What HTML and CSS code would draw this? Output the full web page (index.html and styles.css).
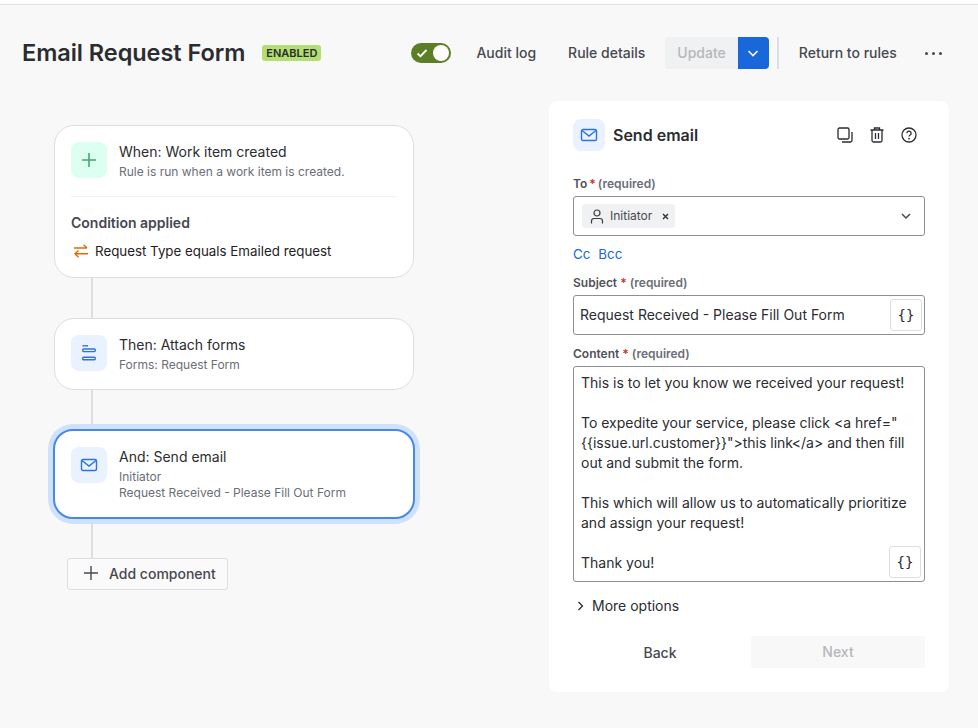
FILE: index.html
```html
<!DOCTYPE html>
<html>
  <head>
    <meta charset="utf-8" />
    <title>Email Request Form</title>
    <link rel="stylesheet" href="styles.css">
  </head>
  <body>
    <div class="top-line"></div>
    <header class="header">
      <h1 class="title">Email Request Form</h1>
      <span class="lozenge">ENABLED</span>
      <div class="toggle">
        <svg class="toggle-check" width="12" height="12" viewBox="0 0 12 12"><path d="M1.500 6.500 4.500 9.200 10.500 3" fill="none" stroke="#fff" stroke-width="1.8"/></svg>
        <span class="toggle-knob"></span>
      </div>
      <a class="head-link audit">Audit log</a>
      <a class="head-link details">Rule details</a>
      <div class="split">
        <span class="split-main">Update</span>
        <span class="split-arrow">
          <svg width="12" height="12" viewBox="0 0 12 12"><path d="M1.500 4 6 8.500 10.500 4" fill="none" stroke="#fff" stroke-width="1.6"/></svg>
        </span>
      </div>
      <span class="head-divider"></span>
      <a class="head-link return">Return to rules</a>
      <span class="dots"><i></i><i></i><i></i></span>
    </header>

    <main class="main">
      <section class="flow">
        <div class="card">
          <div class="card-row">
            <span class="tile tile-green">
              <svg width="18" height="18" viewBox="0 0 18 18"><path d="M9 2v14M2 9h14" stroke="#3fa878" stroke-width="1.6" fill="none"/></svg>
            </span>
            <div class="card-text">
              <div class="card-title">When: Work item created</div>
              <div class="card-sub">Rule is run when a work item is created.</div>
            </div>
          </div>
          <div class="card-rule"></div>
          <div class="cond-title">Condition applied</div>
          <div class="cond-row">
            <svg width="14" height="14" viewBox="0 0 14 14"><path d="M0 4H13M9.500 .8 13 4M14 9.800H1M4.500 6.500 1 9.800 4.500 13.200" fill="none" stroke="#e06c00" stroke-width="1.4"/></svg>
            <span>Request Type equals Emailed request</span>
          </div>
        </div>
        <div class="line"></div>
        <div class="card">
          <div class="card-row">
            <span class="tile tile-blue">
              <svg width="14" height="16" viewBox="0 0 14 16"><g fill="none" stroke="#2d72e0" stroke-width="1.400"><path d="M.5 .8H6"/><rect x=".7" y="4" width="12.600" height="2.600" rx="1"/><rect x=".7" y="12.200" width="12.600" height="2.600" rx="1"/></g></svg>
            </span>
            <div class="card-text">
              <div class="card-title">Then: Attach forms</div>
              <div class="card-sub">Forms: Request Form</div>
            </div>
          </div>
        </div>
        <div class="line"></div>
        <div class="card card-active">
          <div class="card-row">
            <span class="tile tile-blue">
              <svg width="18" height="14" viewBox="0 0 18 14"><g fill="none" stroke="#2d72e0" stroke-width="1.4"><rect x="1.500" y="1.500" width="15" height="11" rx="1.500"/><path d="M2 2.500 9 8l7-5.500"/></g></svg>
            </span>
            <div class="card-text">
              <div class="card-title">And: Send email</div>
              <div class="card-sub">Initiator</div>
              <div class="card-sub">Request Received - Please Fill Out Form</div>
            </div>
          </div>
        </div>
        <div class="line"></div>
        <div class="add-btn">
          <svg width="16" height="16" viewBox="0 0 16 16"><path d="M8 1v14M1 8h14" stroke="#46484f" stroke-width="1.4" fill="none"/></svg>
          <span>Add component</span>
        </div>
      </section>

      <section class="panel">
        <div class="panel-head">
          <span class="tile tile-small">
            <svg width="18" height="14" viewBox="0 0 18 14"><g fill="none" stroke="#2d72e0" stroke-width="1.4"><rect x="1.500" y="1.500" width="15" height="11" rx="1.500"/><path d="M2 2.500 9 8l7-5.500"/></g></svg>
          </span>
          <h2 class="panel-title">Send email</h2>
          <div class="panel-tools">
            <svg width="16" height="16" viewBox="0 0 16 16"><g fill="none" stroke="#2b2c30" stroke-width="1.3"><rect x="1" y="1" width="11" height="11" rx="1.500"/><path d="M15 5v8.500a1.500 1.500 0 0 1-1.500 1.500H5"/></g></svg>
            <svg width="14" height="16" viewBox="0 0 14 16"><g fill="none" stroke="#2b2c30" stroke-width="1.3"><path d="M.5 3h13M4.500 3V1h5v2M2 3v10.500A1.500 1.500 0 0 0 3.500 15h7a1.500 1.500 0 0 0 1.500-1.500V3M5.500 6v6M8.500 6v6"/></g></svg>
            <svg width="16" height="16" viewBox="0 0 16 16"><g fill="none" stroke="#2b2c30" stroke-width="1.3"><circle cx="8" cy="8" r="7"/><path d="M5.900 6.200a2.100 2.100 0 1 1 3.200 1.800c-.7.400-1.100.8-1.100 1.600"/></g><circle cx="8" cy="11.600" r=".9" fill="#2b2c30"/></svg>
          </div>
        </div>

        <label class="field-label label-to">To <b>*</b> <em>(required)</em></label>
        <div class="select">
          <span class="chip">
            <svg width="14" height="15" viewBox="0 0 14 15"><g fill="none" stroke="#3a3b40" stroke-width="1.2"><circle cx="7" cy="4" r="3"/><path d="M1.500 14.500V12a2.500 2.500 0 0 1 2.500-2.500h6a2.500 2.500 0 0 1 2.500 2.500v2.500"/></g></svg>
            <span class="chip-text">Initiator</span>
            <svg class="chip-x" width="7" height="7" viewBox="0 0 7 7"><path d="M1 1l5 5M6 1 1 6" stroke="#2b2c30" stroke-width="1.300" fill="none"/></svg>
          </span>
          <svg class="select-arrow" width="10" height="10" viewBox="0 0 10 10"><path d="M1 3 5 7l4-4" fill="none" stroke="#46484f" stroke-width="1.500"/></svg>
        </div>
        <div class="cc-row"><a>Cc</a><a>Bcc</a></div>

        <label class="field-label label-subject">Subject <b>*</b> <em>(required)</em></label>
        <div class="input">
          <span class="input-text">Request Received - Please Fill Out Form</span>
          <span class="var-btn">{}</span>
        </div>

        <label class="field-label label-content">Content <b>*</b> <em>(required)</em></label>
        <div class="textarea">
          <p>This is to let you know we received your request!</p>
          <p>&nbsp;</p>
          <p>To expedite your service, please click &lt;a href="</p>
          <p>{{issue.url.customer}}"&gt;this link&lt;/a&gt; and then fill</p>
          <p>out and submit the form.</p>
          <p>&nbsp;</p>
          <p>This which will allow us to automatically prioritize</p>
          <p>and assign your request!</p>
          <p>&nbsp;</p>
          <p>Thank you!</p>
          <span class="var-btn var-float">{}</span>
        </div>

        <div class="more">
          <svg width="8" height="10" viewBox="0 0 8 10"><path d="M1.500 1 5.500 5l-4 4" fill="none" stroke="#2b2c30" stroke-width="1.300"/></svg>
          <span>More options</span>
        </div>

        <div class="panel-foot">
          <span class="back">Back</span>
          <span class="next">Next</span>
        </div>
      </section>
    </main>
  </body>
</html>
```

FILE: styles.css
```css
html,
body {
  margin: 0;
  padding: 0;
  height: 100%;
}

body {
  background-color: #f8f8f8;
  font-family: Inter, "Liberation Sans", sans-serif;
  color: #2b2c30;
  overflow: hidden;
}

h1, h2, p {
  margin: 0;
}

.top-line {
  height: 4px;
  background-color: #fff;
  border-bottom: 1px solid #e2e2e4;
}

.header {
  display: flex;
  align-items: center;
  height: 96px;
  padding-left: 22px;
}

.title {
  padding-bottom: 2px;
  font-size: 23.5px;
  font-weight: 600;
  letter-spacing: -0.05px;
  color: #2b2c30;
  white-space: nowrap;
}

.lozenge {
  margin-left: 17px;
  padding: 0 4px;
  height: 16px;
  line-height: 16px;
  font-size: 11px;
  font-weight: 600;
  background-color: #b3df72;
  border-radius: 3px;
}

.toggle {
  display: flex;
  align-items: center;
  justify-content: space-between;
  box-sizing: border-box;
  width: 40px;
  height: 20px;
  margin-left: 90px;
  padding: 0 2px 0 5px;
  background-color: #5b7f24;
  border-radius: 10px;
}

.toggle-knob {
  width: 16px;
  height: 16px;
  background-color: #fff;
  border-radius: 50%;
}

.head-link {
  padding-bottom: 2px;
  font-size: 14px;
  font-weight: 500;
  color: #46484f;
  white-space: nowrap;
}

.audit {
  margin-left: 25px;
}

.details {
  margin-left: 32px;
}

.split {
  display: flex;
  height: 32px;
  margin-left: 20px;
  font-size: 14px;
  font-weight: 500;
}

.split-main {
  display: flex;
  align-items: center;
  padding: 0 12px 2px;
  color: #b6b7bb;
  background-color: #f0f1f2;
  border-radius: 4px 0 0 4px;
}

.split-arrow {
  display: flex;
  align-items: center;
  justify-content: center;
  width: 31px;
  background-color: #1868db;
  border-radius: 0 4px 4px 0;
}

.head-divider {
  width: 2px;
  height: 32px;
  margin-left: 8px;
  background-color: #dddee1;
}

.return {
  margin-left: 20px;
}

.dots {
  display: flex;
  gap: 4px;
  margin-left: 28px;
}

.dots i {
  width: 3px;
  height: 3px;
  background-color: #46484f;
  border-radius: 50%;
}

.main {
  display: flex;
  align-items: flex-start;
  padding-left: 54px;
}

.flow {
  width: 360px;
  margin-top: 24px;
}

.card {
  box-sizing: border-box;
  padding: 16px;
  background-color: #fff;
  border: 1px solid #dddee1;
  border-radius: 20px;
}

.card-active {
  position: relative;
  margin: -1px;
  border: 2px solid #4688ec;
  box-shadow: 0 0 0 5px #cfe1fd;
}

.card-row {
  display: flex;
}

.tile {
  display: flex;
  align-items: center;
  justify-content: center;
  flex: none;
  width: 36px;
  height: 36px;
  border-radius: 8px;
}

.tile-green {
  background-color: #dcfff1;
}

.tile-blue,
.tile-small {
  background-color: #e9f2fe;
}

.tile-small {
  width: 32px;
  height: 32px;
}

.card-text {
  margin-left: 12px;
}

.card-title {
  font-size: 14px;
  line-height: 20px;
  color: #2b2c30;
}

.card-sub {
  font-size: 12px;
  line-height: 16px;
  color: #6b6e76;
}

.card-title + .card-sub {
  margin-top: 2px;
}

.card-rule {
  height: 1px;
  margin-top: 16px;
  background-color: #f0f1f2;
}

.cond-title {
  margin-top: 16px;
  font-size: 14px;
  font-weight: 600;
  line-height: 20px;
  color: #46484f;
}

.cond-row {
  display: flex;
  align-items: center;
  gap: 7px;
  margin-top: 8px;
  margin-left: 3px;
  font-size: 13.33px;
  line-height: 20px;
  color: #1f2024;
}

.line {
  width: 2px;
  height: 40px;
  margin-left: 37px;
  background-color: #dddee1;
}

.add-btn {
  display: flex;
  align-items: center;
  gap: 10px;
  box-sizing: border-box;
  width: 161px;
  height: 32px;
  margin-left: 13px;
  padding: 0 0 2px 15px;
  font-size: 14px;
  font-weight: 500;
  color: #46484f;
  background-color: #fafafa;
  border: 1px solid #dddee1;
  border-radius: 3px;
}

.panel {
  box-sizing: border-box;
  width: 400px;
  height: 591px;
  margin-left: 135px;
  padding: 18px 24px 0;
  background-color: #fff;
  border-radius: 8px;
}

.panel-head {
  display: flex;
  align-items: center;
}

.panel-title {
  margin-left: 8px;
  font-size: 16px;
  font-weight: 600;
  color: #2b2c30;
}

.panel-tools {
  display: flex;
  align-items: center;
  gap: 17px;
  margin-left: auto;
  margin-right: 8px;
}

.field-label {
  display: block;
  font-size: 12px;
  font-weight: 600;
  line-height: 16px;
  color: #505258;
}

.field-label b {
  font-weight: 600;
  color: #c9372c;
}

.field-label em {
  font-style: normal;
  color: #6b6e76;
}

.label-to {
  margin-top: 25px;
  word-spacing: -1px;
}

.select {
  display: flex;
  align-items: center;
  justify-content: space-between;
  box-sizing: border-box;
  height: 40px;
  margin-top: 4px;
  padding: 0 8px;
  border: 1px solid #8c8f97;
  border-radius: 3px;
}

.chip {
  display: flex;
  align-items: center;
  gap: 6px;
  height: 24px;
  padding: 0 6px 0 8px;
  font-size: 12px;
  color: #46484f;
  background-color: #f0f1f2;
  border-radius: 3px;
}

.chip-text {
  padding-bottom: 2px;
}

.chip-x {
  margin-left: 4px;
}

.select-arrow {
  margin-right: 5px;
}

.cc-row {
  display: flex;
  gap: 8px;
  margin-top: 8px;
  font-size: 13.33px;
  line-height: 20px;
  color: #1868db;
}

.label-subject {
  margin-top: 11px;
}

.input {
  display: flex;
  align-items: center;
  justify-content: space-between;
  box-sizing: border-box;
  height: 40px;
  margin-top: 4px;
  padding: 0 2px 0 6px;
  font-size: 14px;
  border: 1px solid #8c8f97;
  border-radius: 3px;
}

.input-text {
  padding-bottom: 2px;
}

.var-btn {
  display: flex;
  align-items: center;
  justify-content: center;
  box-sizing: border-box;
  width: 32px;
  height: 32px;
  font-family: "DejaVu Sans Mono", monospace;
  font-size: 14px;
  color: #2b2c30;
  background-color: #fff;
  border: 1px solid #dddee1;
  border-radius: 3px;
}

.label-content {
  margin-top: 11px;
}

.textarea {
  position: relative;
  box-sizing: border-box;
  height: 216px;
  margin-top: 4px;
  padding: 6px 7px;
  font-size: 14px;
  line-height: 20px;
  white-space: nowrap;
  border: 1px solid #8c8f97;
  border-radius: 3px;
}

.var-float {
  position: absolute;
  right: 3px;
  bottom: 3px;
}

.more {
  display: flex;
  align-items: center;
  gap: 7px;
  margin-top: 14px;
  padding-left: 4px;
  font-size: 14px;
  line-height: 20px;
  color: #2b2c30;
}

.panel-foot {
  display: flex;
  align-items: center;
  margin-top: 20px;
  font-size: 14px;
  font-weight: 500;
}

.back {
  width: 174px;
  text-align: center;
  color: #46484f;
}

.next {
  flex: none;
  width: 174px;
  height: 32px;
  margin-left: 4px;
  line-height: 32px;
  text-align: center;
  color: #b6b7bb;
  background-color: #f8f8f8;
  border-radius: 3px;
}
```
